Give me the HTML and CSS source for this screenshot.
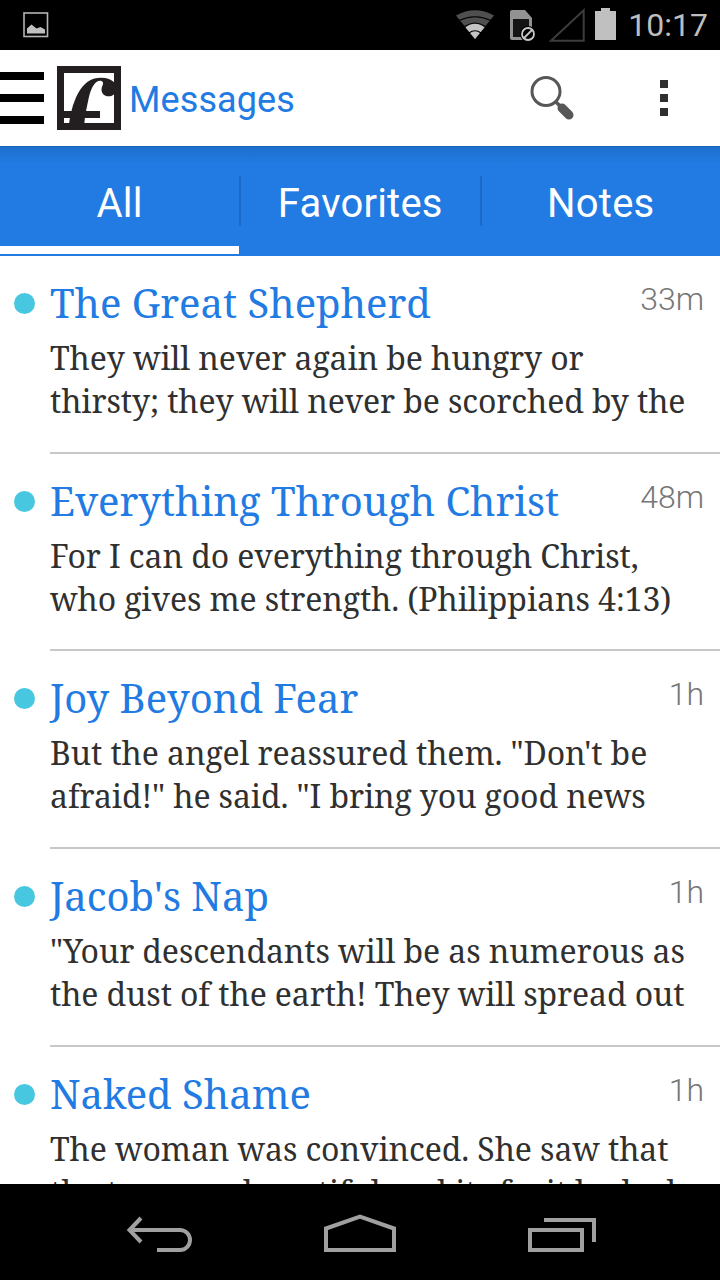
FILE: index.html
```html
<!DOCTYPE html>
<html lang="en">
<head>
  <meta charset="UTF-8">
  <meta name="viewport" content="width=device-width, initial-scale=1.0">
  <title>Messages</title>
  <link rel="stylesheet" href="styles.css">
</head>
<body>
  <!-- Status bar -->
  <div class="status-bar">
    <svg class="status-picture" width="26" height="26" viewBox="0 0 26 26">
      <rect x="1" y="1" width="23.5" height="23.5" fill="none" stroke="#b4b4b4" stroke-width="1.6"/>
      <path d="M4 21.500V16.500l4.500-4 5 4 4-1.500 4.500 2.500v4z" fill="#c0c0c0"/>
    </svg>
    <div class="status-icons">
      <svg class="wifi" width="40" height="32" viewBox="0 0 40 32">
        <path d="M20 30 1 6.500Q20-4 39 6.500z" fill="#4f4f4f"/>
        <path d="M20 30 10.500 18.500Q20 11 29.500 18.500z" fill="#c4c4c4"/>
        <path d="M4 11.500Q20 4 36 11.500M9.500 17.500Q20 10.500 30.500 17.500M14 24Q20 19.500 26 24" fill="none" stroke="#000" stroke-width="1.200"/>
      </svg>
      <svg class="sim" width="26" height="32" viewBox="0 0 26 32">
        <path d="M0 2Q0 0 2 0h13l7 8v20q0 2-2 2H2q-2 0-2-2z" fill="#929292"/>
        <path d="M3 9h16v18H3z" fill="#141414"/>
        <circle cx="18" cy="24" r="8" fill="#000"/>
        <circle cx="18" cy="24" r="6" fill="none" stroke="#c8c8c8" stroke-width="1.800"/>
        <path d="M14 28l8-8" stroke="#c8c8c8" stroke-width="1.800"/>
      </svg>
      <svg class="signal" width="36" height="34" viewBox="0 0 36 34">
        <path d="M2 32.700h32.700V2.300z" fill="none" stroke="#3c3c3c" stroke-width="2"/>
      </svg>
      <svg class="battery" width="21" height="32" viewBox="0 0 21 32">
        <path d="M0 3h6V0h9v3h6v29H0z" fill="#c0c0c0"/>
      </svg>
      <span class="clock">10:17</span>
    </div>
  </div>

  <!-- Action bar -->
  <div class="action-bar">
    <div class="menu-lines"><i></i><i></i><i></i></div>
    <svg class="logo" width="64" height="64" viewBox="0 0 64 64">
      <path d="M0 0h64v64H0z" fill="#231f20"/>
      <path d="M7 7h50v50H7z" fill="#fff"/>
      <path d="M12 58C13 50 15 41 18 34 21 26 26 19 31 15.500 35 12.500 39.500 11.700 44 11.700 50 11.700 54.500 13.500 58 17v10.500C56 29.500 54 30.300 51.500 30.300 47.500 30.300 44.500 27.500 44.500 23.500 44.500 20.500 46.500 18.500 46 16.500 45.200 14.500 42 14.300 39.500 16 35.500 19 33 26 31.500 33 29.800 41 27.800 50 27.300 58z" fill="#231f20"/>
      <path d="M7 45h36v7H7z" fill="#231f20"/>
    </svg>
    <h1>Messages</h1>
    <svg class="search" width="46" height="46" viewBox="0 0 46 46">
      <circle cx="17" cy="16.500" r="14" fill="none" stroke="#575757" stroke-width="3"/>
      <path d="M26.500 26.500l4 4" stroke="#575757" stroke-width="3.500"/>
      <path d="M33 33l7 7" stroke="#575757" stroke-width="9" stroke-linecap="round"/>
    </svg>
    <div class="overflow"><i></i><i></i><i></i></div>
  </div>

  <!-- Tabs -->
  <div class="tabs">
    <div class="tab active"><span>All</span></div>
    <div class="tab"><span>Favorites</span></div>
    <div class="tab"><span>Notes</span></div>
  </div>

  <!-- Message list -->
  <div class="messages">
    <div class="message">
      <span class="dot"></span>
      <div class="content">
        <div class="message-head"><h2>The Great Shepherd</h2><span class="time">33m</span></div>
        <p>They will never again be hungry or<br>thirsty; they will never be scorched by the</p>
      </div>
    </div>
    <div class="message">
      <span class="dot"></span>
      <div class="content">
        <div class="message-head"><h2>Everything Through Christ</h2><span class="time">48m</span></div>
        <p>For I can do everything through Christ,<br>who gives me strength. (Philippians 4:13)</p>
      </div>
    </div>
    <div class="message">
      <span class="dot"></span>
      <div class="content">
        <div class="message-head"><h2>Joy Beyond Fear</h2><span class="time">1h</span></div>
        <p>But the angel reassured them. "Don't be<br>afraid!" he said. "I bring you good news</p>
      </div>
    </div>
    <div class="message">
      <span class="dot"></span>
      <div class="content">
        <div class="message-head"><h2>Jacob's Nap</h2><span class="time">1h</span></div>
        <p>"Your descendants will be as numerous as<br>the dust of the earth! They will spread out</p>
      </div>
    </div>
    <div class="message">
      <span class="dot"></span>
      <div class="content">
        <div class="message-head"><h2>Naked Shame</h2><span class="time">1h</span></div>
        <p>The woman was convinced. She saw that<br>the tree was beautiful and its fruit looked</p>
      </div>
    </div>
  </div>

  <!-- Navigation bar -->
  <div class="nav-bar">
    <svg width="72" height="40" viewBox="0 0 72 40">
      <path d="M17 4 5.500 16 17 28M6 16h50a10 10 0 0 1 0 20H33" fill="none" stroke="#a0a0a0" stroke-width="4"/>
    </svg>
    <svg width="72" height="40" viewBox="0 0 72 40">
      <path d="M2 36V14.500L36 2.500l34 12V36z" fill="none" stroke="#a0a0a0" stroke-width="4"/>
    </svg>
    <svg width="72" height="40" viewBox="0 0 72 40">
      <path d="M6 16h52v20H6zM20 6h50v22" fill="none" stroke="#a0a0a0" stroke-width="4"/>
    </svg>
  </div>
</body>
</html>
```
FILE: styles.css
```css
* {
  box-sizing: border-box;
}
body {
  margin: 0;
  height: 1280px;
  display: flex;
  flex-direction: column;
  overflow: hidden;
  background: #fff;
  font-family: Roboto, sans-serif;
}
svg {
  display: block;
  flex: none;
}
h1, h2, p {
  margin: 0;
  font-weight: 400;
  white-space: nowrap;
}
.status-bar {
  height: 50px;
  flex: none;
  padding: 0 12px 0 23px;
  display: flex;
  justify-content: space-between;
  align-items: center;
  background: #000;
}
.status-icons {
  display: flex;
  align-items: center;
}
.sim {
  margin: 2px 0 0 15px;
}
.signal {
  margin-left: 13px;
}
.battery {
  margin: 0 12px 2px 10px;
}
.clock {
  color: #bebebe;
  font-size: 32px;
  line-height: 50px;
}
.action-bar {
  height: 96px;
  flex: none;
  display: flex;
  align-items: center;
}
.menu-lines {
  width: 44px;
  display: flex;
  flex-direction: column;
  gap: 14px;
}
.menu-lines i {
  height: 8px;
  background: #000;
}
.logo {
  margin-left: 13px;
}
h1 {
  flex: 1;
  margin-left: 8px;
  padding-top: 4px;
  font-size: 36px;
  line-height: 50px;
  letter-spacing: 0.1px;
  color: #217be2;
}
.overflow {
  margin: 0 52px 0 85px;
  display: flex;
  flex-direction: column;
  gap: 6px;
}
.overflow i {
  width: 8px;
  height: 8px;
  background: #303030;
}
.tabs {
  height: 110px;
  flex: none;
  display: flex;
  background: linear-gradient(#1e65b5, #1d70cf 2px, #1f74d6 8px, #217be2 18px);
  padding-bottom: 2px;
}
.tab {
  flex: 1;
  display: flex;
  align-items: center;
  border-bottom: 8px solid transparent;
  color: #fff;
  font-size: 40px;
  letter-spacing: 0.2px;
}
.tab.active {
  flex: none;
  width: 239px;
  border-bottom-color: #fff;
}
.tab span {
  flex: 1;
  height: 50px;
  line-height: 56px;
  margin-top: 10px;
  text-align: center;
}
.tab + .tab span {
  border-left: 2px solid #1a6bc9;
}
.messages {
  flex: 1;
  min-height: 0;
  overflow: hidden;
}
.message {
  height: 197.7px;
  display: flex;
}
.dot {
  width: 21px;
  height: 21px;
  flex: none;
  margin: 37px 15px 0 14px;
  border-radius: 50%;
  background: #48c7e0;
}
.content {
  flex: 1;
  min-width: 0;
  padding: 20px 16px 0 0;
  border-bottom: 2px solid #c8c8c8;
}
.message-head {
  height: 60px;
  display: flex;
  justify-content: space-between;
}
h2 {
  font-family: "Noto Serif", "DejaVu Serif", serif;
  font-size: 40px;
  line-height: 54px;
  color: #217be2;
}
.time {
  font-size: 32px;
  font-weight: 300;
  line-height: 46px;
  color: #767676;
}
p {
  font-family: "Noto Serif", "DejaVu Serif", serif;
  font-size: 32px;
  line-height: 43px;
  letter-spacing: -0.11px;
  color: #303030;
}
.nav-bar {
  height: 96px;
  flex: none;
  padding: 4px 124px 0;
  display: flex;
  justify-content: space-between;
  align-items: center;
  background: #000;
}
```
